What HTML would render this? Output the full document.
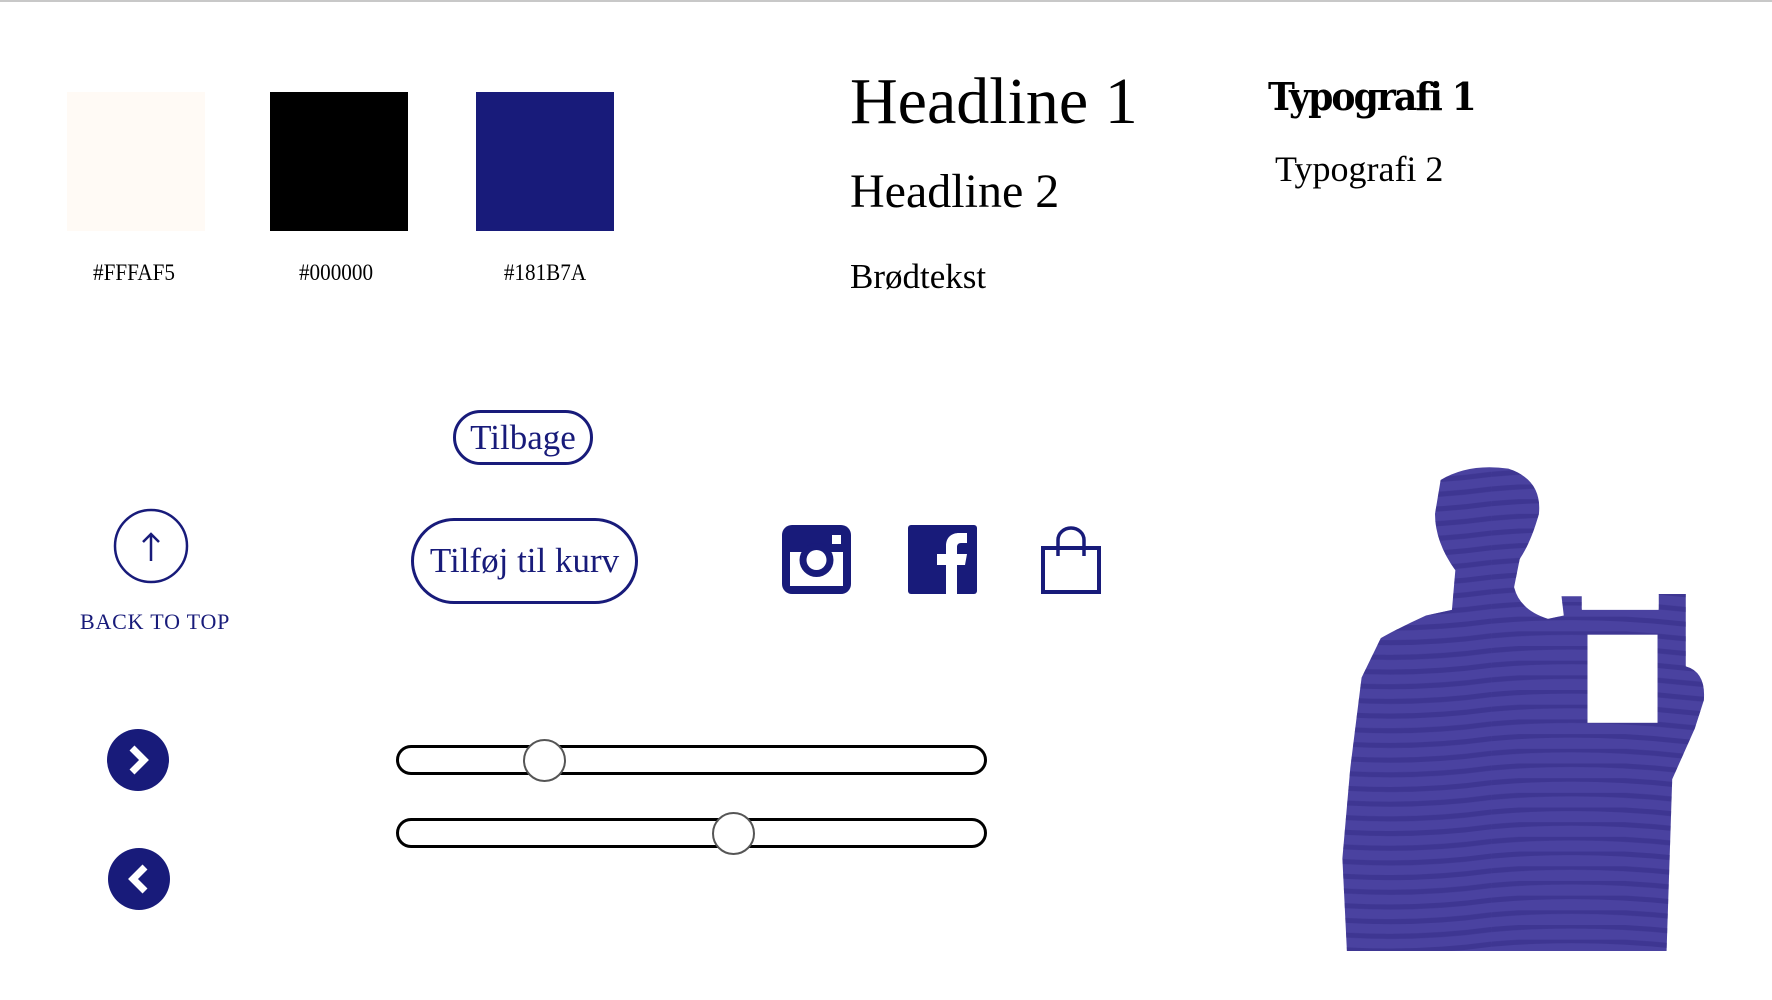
<!DOCTYPE html>
<html><head><meta charset="utf-8"><style>
*{margin:0;padding:0;box-sizing:border-box}
body{width:1772px;height:1000px;background:#fff;position:relative;overflow:hidden;font-family:"Liberation Serif",serif;color:#000}
.a{position:absolute}
.sw{position:absolute;top:92px;width:138px;height:139px}
.lab{position:absolute;top:260px;font-size:23px;width:180px;text-align:center;transform:scaleX(.92)}
.btn{position:absolute;border:3px solid #181B7A;border-radius:60px;color:#181B7A;display:flex;align-items:center;justify-content:center;font-size:35px}
.track{position:absolute;left:396px;width:591px;height:30px;border:3px solid #000;border-radius:15px}
.thumb{position:absolute;width:43px;height:43px;border-radius:50%;border:2px solid #555;background:#fff}
</style></head><body>
<div class="a" style="left:0;top:0;width:1772px;height:2px;background:#c8c8c8"></div>
<div class="sw" style="left:67px;background:#FFFAF5"></div>
<div class="sw" style="left:270px;background:#000"></div>
<div class="sw" style="left:476px;background:#181B7A"></div>
<div class="lab" style="left:44px">#FFFAF5</div>
<div class="lab" style="left:246px">#000000</div>
<div class="lab" style="left:455px">#181B7A</div>

<div class="a" style="left:850px;top:62px;font-size:66px;line-height:80px">Headline 1</div>
<div class="a" style="left:850px;top:162px;font-size:48px;line-height:60px">Headline 2</div>
<div class="a" style="left:850px;top:255px;font-size:35px;line-height:44px">Brødtekst</div>
<div class="a" style="left:1268px;top:72px;font-size:38px;font-weight:bold;font-family:'DejaVu Serif',serif;line-height:50px;letter-spacing:-2px;transform:scaleX(.95);transform-origin:left">Typografi 1</div>
<div class="a" style="left:1275px;top:146px;font-size:36px;line-height:46px">Typografi 2</div>

<div class="btn" style="left:453px;top:410px;width:140px;height:55px">Tilbage</div>
<div class="btn" style="left:411px;top:518px;width:227px;height:86px">Tilføj til kurv</div>

<svg class="a" style="left:112px;top:507px" width="80" height="80" viewBox="0 0 80 80"><circle cx="39" cy="39" r="36" fill="none" stroke="#181B7A" stroke-width="2.5"/><path d="M39 54V27M31 35l8-8 8 8" fill="none" stroke="#181B7A" stroke-width="2.5"/></svg>
<div class="a" style="left:80px;top:609px;font-size:22px;color:#181B7A;letter-spacing:.8px">BACK TO TOP</div>

<svg class="a" style="left:106px;top:728px" width="64" height="64" viewBox="0 0 64 64"><circle cx="32" cy="32" r="31" fill="#181B7A"/><path d="M26 20l12 12-12 12" fill="none" stroke="#fff" stroke-width="7"/></svg>
<svg class="a" style="left:107px;top:847px" width="64" height="64" viewBox="0 0 64 64"><circle cx="32" cy="32" r="31" fill="#181B7A"/><path d="M38 20L26 32l12 12" fill="none" stroke="#fff" stroke-width="7"/></svg>

<div class="track" style="top:745px"></div>
<div class="thumb" style="left:523px;top:739px"></div>
<div class="track" style="top:818px"></div>
<div class="thumb" style="left:712px;top:812px"></div>

<svg class="a" style="left:782px;top:525px" width="69" height="69" viewBox="0 0 69 69"><rect x="0" y="0" width="69" height="69" rx="10" fill="#181B7A"/><rect x="8" y="27" width="53" height="34" fill="#fff"/><circle cx="34.5" cy="35" r="17" fill="#181B7A"/><circle cx="34.5" cy="35" r="10" fill="#fff"/><rect x="50" y="10" width="9" height="9" fill="#fff"/></svg>
<svg class="a" style="left:908px;top:525px" width="69" height="69" viewBox="0 0 69 69"><rect width="69" height="69" rx="3" fill="#181B7A"/><path d="M38 69V40h-9v-11h9v-8c0-9 6-13 13-13h8v10h-6c-3 0-4 2-4 4v7h10l-2 11h-8v29z" fill="#fff"/></svg>
<svg class="a" style="left:1038px;top:526px" width="66" height="70" viewBox="0 0 66 70"><path d="M5 22h56v44H5z" fill="none" stroke="#181B7A" stroke-width="4"/><path d="M20 30V14a13 12 0 0 1 26 0v16" fill="none" stroke="#181B7A" stroke-width="3.5"/></svg>

<svg class="a" style="left:1340px;top:463px" width="373" height="497" viewBox="1186 410 330 440">
<defs>
<pattern id="st" x="0" y="0" width="330" height="13" patternUnits="userSpaceOnUse"><path d="M0 4Q80 -3 165 6T330 4" stroke="#342c86" stroke-width="4.5" fill="none"/></pattern>
<clipPath id="cp"><path id="sp" d="M1275 425Q1300 410 1335 415Q1365 425 1362 455Q1355 480 1345 495L1340 520Q1345 540 1370 548L1384 545L1382 528H1400V540H1468V526H1492V590Q1510 595 1508 620L1500 645L1480 690L1475 842H1192L1188 760L1195 680L1205 600L1222 565Q1240 555 1262 545L1285 540L1288 505Q1270 480 1270 455Z"/></clipPath>
</defs>
<use href="#sp" fill="#4a42a0"/>
<rect x="1186" y="410" width="330" height="440" fill="url(#st)" opacity=".55" clip-path="url(#cp)"/>
<rect x="1400" y="526" width="68" height="13" fill="#fff"/>
<rect x="1405" y="562" width="62" height="78" fill="#fff"/>
</svg>
</body></html>
